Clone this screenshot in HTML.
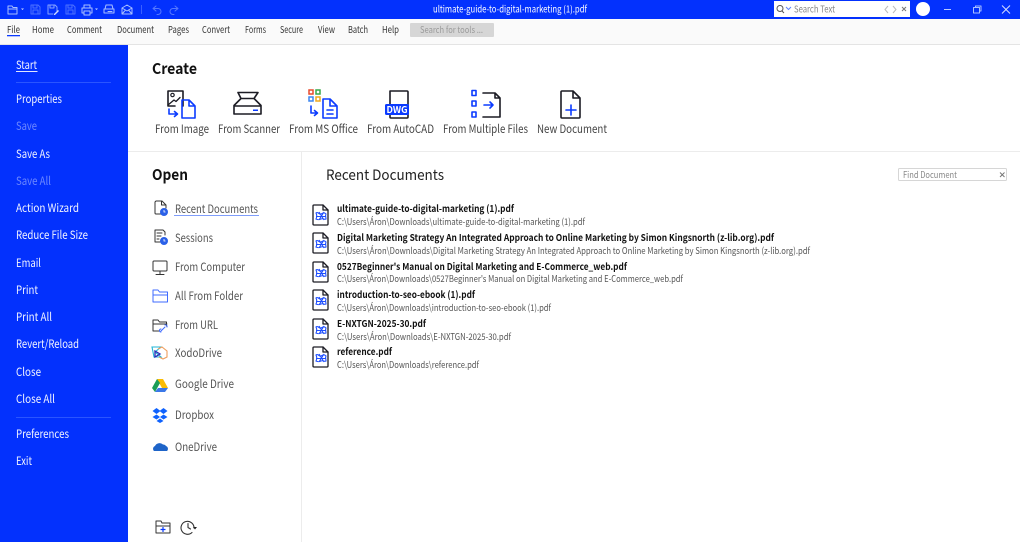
<!DOCTYPE html>
<html><head><meta charset="utf-8"><title>PDF</title>
<style>
html,body{margin:0;padding:0;background:#fff;width:1020px;height:542px;overflow:hidden}
svg{display:block}
text{font-family:"Noto Sans CJK JP","Liberation Sans",sans-serif}
.m{font-size:9.5px;fill:#333}
.s{font-size:11.5px;fill:#fff;fill-opacity:.95}
.d{fill-opacity:.42}
.c{font-size:11.5px;fill:#444}
.o{font-size:11.5px;fill:#555}
.b{font-size:9.5px;font-weight:bold;fill:#111}
.p{font-size:9px;fill:#555}
.k{fill:none;stroke:#1c1c24;stroke-width:1.6;stroke-linejoin:round;stroke-linecap:round}
.u{fill:none;stroke:#0b3bff;stroke-width:1.6;stroke-linejoin:round;stroke-linecap:round}
.t{fill:none;stroke:#a9c0ff;stroke-width:1;stroke-linejoin:round;stroke-linecap:round}
.g{fill:none;stroke:#333;stroke-width:1;stroke-linejoin:round;stroke-linecap:round}
.h{fill:none;stroke:#3f6bff;stroke-width:1;stroke-linejoin:round;stroke-linecap:round}
</style></head><body>
<svg width="1020" height="542" viewBox="0 0 1020 542" xmlns="http://www.w3.org/2000/svg">
<defs>
<g id="pdf"><path class="k" d="M1 1h9l5 5v14a1 1 0 0 1-1 1H1a1 1 0 0 1-1-1V2a1 1 0 0 1 1-1z" style="stroke-width:1.3"/><path class="k" d="M10 1v5h5" style="stroke-width:1.3"/><path d="M3 9c2-2 3 2 5 1s3-2 5 0c-1 2 0 3 0 5-2 1-3-1-5 0s-3 1-5 0c1-2 1-4 0-6zM3 12.500h10M6 8l5 8M11 8l-5 8" fill="none" stroke="#1f4fff" stroke-width="1.100"/></g>
</defs>
<rect width="1020" height="542" fill="#fff"/>
<rect width="1020" height="19" fill="#0331fd"/>
<rect y="19" width="1020" height="25" fill="#fafafa"/>
<rect y="44" width="1020" height="1" fill="#e4e4e4"/>
<rect y="45" width="128" height="497" fill="#0331fd"/>
<rect x="128" y="151" width="892" height="1" fill="#ececec"/>
<rect x="301" y="152" width="1" height="390" fill="#ececec"/>

<!-- title bar icons -->
<path class="t" d="M8 14V6h4l1 1.500h4V14zM8 9h9"/><path d="M21 8.500h3l-1.500 1.500z" fill="#cfdcff"/>
<path class="t" style="opacity:.45" d="M31 5h7l2 2v7h-9zM33 5v3h4V5M33 14v-4h5v4"/>
<path class="t" style="opacity:.8" d="M48 5h7l2 2v4M48 5v9h5M50 5v3h4V5"/><path d="M54 14l4-4 1 1-4 4h-1z" fill="#cfdcff"/>
<path class="t" style="opacity:.45" d="M66 5h7l2 2v7h-9zM68 5v3h4V5M68 14v-4h5v4"/>
<path class="t" d="M84 8V5h6v3M82 8h10v5h-2M84 13h-2V8M84 11h6v4h-6z"/><path d="M95 8.500h3l-1.500 1.500z" fill="#cfdcff"/>
<path class="t" d="M106 5h6l1 4h-8zM104 9h10v4h-10zM108 11.500h4"/>
<path class="t" d="M122 8l5-3 5 3v6h-10zM122 8l5 3 5-3M122 14l3.500-4M132 14l-3.500-4"/>
<rect x="141" y="5" width="1" height="9" fill="#3a60ff"/>
<path class="t" style="opacity:.5" d="M156 6l-3 2.500 3 2.500M153 8.500h5a3 3 0 0 1 0 6h-1"/>
<path class="t" style="opacity:.5" d="M175 6l3 2.500-3 2.500M178 8.500h-5a3 3 0 0 0 0 6h1"/>
<text x="433" y="12.500" font-size="9.500" fill="#fff" textLength="154" lengthAdjust="spacingAndGlyphs">ultimate-guide-to-digital-marketing (1).pdf</text>

<rect x="774" y="1" width="136" height="16" fill="#fff"/>
<circle cx="780" cy="8.500" r="3" fill="none" stroke="#555" stroke-width="1"/><path d="M782 11l2 2" stroke="#555" stroke-width="1"/>
<path d="M786 7l2.500 2.500L791 7" fill="none" stroke="#5f83ff" stroke-width="1"/>
<text x="794" y="12.500" font-size="9.500" fill="#888" textLength="41" lengthAdjust="spacingAndGlyphs">Search Text</text>
<path d="M888 6l-3 3.500 3 3.500M893 6l3 3.500-3 3.500" fill="none" stroke="#bbb" stroke-width="1"/>
<path d="M902 7l4 4M906 7l-4 4" stroke="#777" stroke-width="1"/>
<circle cx="923" cy="9" r="7" fill="#fff"/>
<rect x="944" y="9" width="7" height="1" fill="#bccbff"/>
<path class="t" d="M973.500 7.500h6v5.500h-6zM975.500 7.500V6h5.500v5h-1.500"/>
<path d="M1002 5.500l8 8M1010 5.500l-8 8" stroke="#d5deff" stroke-width="1"/>

<!-- menu -->
<text class="m" x="7" y="33" textLength="13" lengthAdjust="spacingAndGlyphs">File</text>
<rect x="7" y="35" width="13" height="1.300" fill="#0b3bff"/>
<text class="m" x="32" y="33" textLength="22" lengthAdjust="spacingAndGlyphs">Home</text>
<text class="m" x="67" y="33" textLength="35" lengthAdjust="spacingAndGlyphs">Comment</text>
<text class="m" x="117" y="33" textLength="37" lengthAdjust="spacingAndGlyphs">Document</text>
<text class="m" x="168" y="33" textLength="21" lengthAdjust="spacingAndGlyphs">Pages</text>
<text class="m" x="202" y="33" textLength="28" lengthAdjust="spacingAndGlyphs">Convert</text>
<text class="m" x="245" y="33" textLength="21" lengthAdjust="spacingAndGlyphs">Forms</text>
<text class="m" x="280" y="33" textLength="23" lengthAdjust="spacingAndGlyphs">Secure</text>
<text class="m" x="318" y="33" textLength="17" lengthAdjust="spacingAndGlyphs">View</text>
<text class="m" x="348" y="33" textLength="20" lengthAdjust="spacingAndGlyphs">Batch</text>
<text class="m" x="382" y="33" textLength="17" lengthAdjust="spacingAndGlyphs">Help</text>
<rect x="410" y="23" width="84" height="14" rx="1" fill="#d6d6d6"/>
<text x="420" y="33" font-size="9" fill="#9a9a9a" textLength="63" lengthAdjust="spacingAndGlyphs">Search for tools ...</text>

<!-- sidebar -->
<text class="s" x="16" y="69" textLength="21" lengthAdjust="spacingAndGlyphs">Start</text>
<rect x="16" y="71" width="21.500" height="1" fill="#dfe6ff"/>
<rect x="16" y="82" width="95" height="1" fill="#2a55ff"/>
<text class="s" x="16" y="103" textLength="46" lengthAdjust="spacingAndGlyphs">Properties</text>
<text class="s d" x="16" y="130" textLength="21" lengthAdjust="spacingAndGlyphs">Save</text>
<text class="s" x="16" y="158" textLength="34" lengthAdjust="spacingAndGlyphs">Save As</text>
<text class="s d" x="16" y="185" textLength="35" lengthAdjust="spacingAndGlyphs">Save All</text>
<text class="s" x="16" y="212" textLength="63" lengthAdjust="spacingAndGlyphs">Action Wizard</text>
<text class="s" x="16" y="239" textLength="72" lengthAdjust="spacingAndGlyphs">Reduce File Size</text>
<text class="s" x="16" y="267" textLength="25" lengthAdjust="spacingAndGlyphs">Email</text>
<text class="s" x="16" y="294" textLength="22" lengthAdjust="spacingAndGlyphs">Print</text>
<text class="s" x="16" y="321" textLength="36" lengthAdjust="spacingAndGlyphs">Print All</text>
<text class="s" x="16" y="348" textLength="63" lengthAdjust="spacingAndGlyphs">Revert/Reload</text>
<text class="s" x="16" y="376" textLength="25" lengthAdjust="spacingAndGlyphs">Close</text>
<text class="s" x="16" y="403" textLength="39" lengthAdjust="spacingAndGlyphs">Close All</text>
<rect x="16" y="417" width="95" height="1" fill="#2a55ff"/>
<text class="s" x="16" y="438" textLength="53" lengthAdjust="spacingAndGlyphs">Preferences</text>
<text class="s" x="16" y="465" textLength="16" lengthAdjust="spacingAndGlyphs">Exit</text>

<!-- create -->
<text x="152" y="74" font-size="15" font-weight="bold" fill="#111" textLength="45" lengthAdjust="spacingAndGlyphs">Create</text>
<path class="k" d="M183 106v-15h-15v15h7"/><circle cx="172.500" cy="95" r="1.700" class="k" style="stroke-width:1.200"/><path class="k" style="stroke-width:1.300" d="M168 105l6-5 2 1.500 4-4"/>
<path class="u" d="M182 100h7l6 6v12h-13zM189 100v6h6"/><path class="u" d="M169 109v5h8M174.500 111.500l3 2.500-3 2.500"/>
<path class="k" d="M238 92.500h20l-4 6 7 7v8.500h-27v-8.500l7-7zM234 106h27M242 98.500h11"/><rect x="253" y="109.500" width="5" height="1.500" fill="#0b3bff"/>
<rect x="309" y="90" width="4" height="4" fill="none" stroke="#e74b2e" stroke-width="1.500"/><rect x="316" y="90" width="4" height="4" fill="none" stroke="#37a84a" stroke-width="1.500"/><rect x="309" y="97" width="4" height="4" fill="none" stroke="#3d86f0" stroke-width="1.500"/><rect x="316" y="97" width="4" height="4" fill="none" stroke="#f0a91f" stroke-width="1.500"/>
<path class="u" d="M323 99h7l7 7v12h-14zM330 99v7h7M327 110h6M327 114h6"/><path class="u" d="M311 106v7h6M314.500 110.500l3 2.500-3 2.500"/>
<path class="k" d="M390 105V91h17a1 1 0 0 1 1 1v25a1 1 0 0 1-1 1h-16a1 1 0 0 1-1-1v-2"/>
<rect x="385" y="104" width="24" height="11" rx="1.500" fill="#0b3bff"/><text x="386.500" y="113" font-size="9" font-weight="bold" fill="#fff" textLength="21" lengthAdjust="spacingAndGlyphs">DWG</text>
<path class="u" d="M472 90.500h4v5h-4zM472 101h4v5h-4zM472 112h4v5h-4z"/>
<path class="k" d="M483 93h12l5 5v19h-17M495 93v5h5"/><path class="u" d="M484 105h9M490 102l3 3-3 3"/>
<path class="k" d="M562 91h11l7 7v19a1 1 0 0 1-1 1h-17a1 1 0 0 1-1-1V92a1 1 0 0 1 1-1zM573 91v7h7"/><path class="u" d="M566 110h10M571 105v10"/>
<text class="c" x="155" y="133" textLength="54" lengthAdjust="spacingAndGlyphs">From Image</text>
<text class="c" x="218" y="133" textLength="62" lengthAdjust="spacingAndGlyphs">From Scanner</text>
<text class="c" x="289" y="133" textLength="69" lengthAdjust="spacingAndGlyphs">From MS Office</text>
<text class="c" x="367" y="133" textLength="67" lengthAdjust="spacingAndGlyphs">From AutoCAD</text>
<text class="c" x="443" y="133" textLength="85" lengthAdjust="spacingAndGlyphs">From Multiple Files</text>
<text class="c" x="537" y="133" textLength="70" lengthAdjust="spacingAndGlyphs">New Document</text>

<!-- open -->
<text x="152" y="180" font-size="15" font-weight="bold" fill="#111" textLength="36" lengthAdjust="spacingAndGlyphs">Open</text>
<path class="g" d="M161 214h-5a1 1 0 0 1-1-1v-11l1-1h6l4 4v3M161.500 201v4h4.500"/><circle cx="164" cy="212" r="3.500" fill="#2a60e8" stroke="#2a60e8"/><path d="M164 210v2h1.500" stroke="#fff" fill="none" stroke-width=".8"/>
<text class="o" x="175" y="213" textLength="83" lengthAdjust="spacingAndGlyphs">Recent Documents</text>
<rect x="174" y="215" width="85" height="1" fill="#7f9dfa"/>
<path class="g" d="M155 230h8l2 2v3M155 230v12h5M157 233h5M157 236h4M157 239h2"/><circle cx="164" cy="241" r="3.500" fill="#2a60e8" stroke="#2a60e8"/><path d="M164 239v2h1.500" stroke="#fff" fill="none" stroke-width=".8"/>
<text class="o" x="175" y="242" textLength="38" lengthAdjust="spacingAndGlyphs">Sessions</text>
<rect x="153" y="261" width="14" height="10" rx="1" class="g"/><path class="g" d="M160 271v3M156 274.500h8"/>
<text class="o" x="175" y="271" textLength="70" lengthAdjust="spacingAndGlyphs">From Computer</text>
<path class="h" d="M153 290h5l1.500 2h8v10h-14.500zM153 295h14.500"/>
<text class="o" x="175" y="300" textLength="68" lengthAdjust="spacingAndGlyphs">All From Folder</text>
<path class="g" d="M153 331v-11h5l1.500 2h7v4M153 324h14M153 331h6"/><path class="h" d="M161 331l4-4M165 325a1.500 1.500 0 0 1 2 2M161 329a1.500 1.500 0 0 0 0 3"/>
<text class="o" x="175" y="329" textLength="43" lengthAdjust="spacingAndGlyphs">From URL</text>
<path d="M152 347h9l-6 5 6 5h-7z" fill="none" stroke="#23b6d6" stroke-width="1.100"/><path d="M158 349l4-2 5 4v6l-4 2-4-2" fill="none" stroke="#ee9d5d" stroke-width="1.100"/><path d="M155 351l5 3-5 3z" fill="none" stroke="#2b2bb8" stroke-width="1.300"/>
<text class="o" x="175" y="357" textLength="47" lengthAdjust="spacingAndGlyphs">XodoDrive</text>
<path d="M157 379h6l5 9h-6z" fill="#fbbc05"/><path d="M157 379l-5 9 3 4 5-9z" fill="#1a9d58"/><path d="M155 392h10l3-4h-10z" fill="#3a78e8"/>
<text class="o" x="175" y="388" textLength="59" lengthAdjust="spacingAndGlyphs">Google Drive</text>
<path d="M156.500 408l4 3-4 3-4-3zM163.500 408l4 3-4 3-4-3zM156.500 414.500l3.500 2.500-3.500 2.500-4-2.500zM163.500 414.500l4 2.500-4 2.500-3.500-2.500zM160 418.500l3.500 2.500-3.500 2-3.500-2z" fill="#0f62fe"/>
<text class="o" x="175" y="419" textLength="39" lengthAdjust="spacingAndGlyphs">Dropbox</text>
<path d="M154 451a3 3 0 0 1 1-5 5 5 0 0 1 8-1.500 3.500 3.500 0 0 1 3 1.500 3 3 0 0 1 1 5z" fill="#1e64c8"/>
<text class="o" x="175" y="451" textLength="42" lengthAdjust="spacingAndGlyphs">OneDrive</text>
<path class="g" d="M156 533v-12h5l1 2h8v10zM156 526h14"/><path d="M163 527v5M160.500 529.500h5" stroke="#0b3bff" stroke-width="1.200"/>
<path class="g" d="M194 528a6.500 6.500 0 1 0-2 4.500M188 523.500v4l2.500 1.500" style="stroke-width:1.100"/><path d="M193 527h4l-2 2.500z" fill="#222"/>

<!-- recent -->
<text x="326" y="180" font-size="14.500" fill="#222" textLength="118" lengthAdjust="spacingAndGlyphs">Recent Documents</text>
<rect x="898.500" y="168.500" width="108" height="12" rx="1" fill="#fff" stroke="#d6d6d6"/>
<text x="903" y="178" font-size="9" fill="#888" textLength="54" lengthAdjust="spacingAndGlyphs">Find Document</text>
<path d="M1000 172.500l4.500 4.500M1004.500 172.500l-4.500 4.500" stroke="#777" stroke-width="1"/>

<use href="#pdf" x="313" y="204"/>
<text class="b" x="337" y="212" textLength="177" lengthAdjust="spacingAndGlyphs">ultimate-guide-to-digital-marketing (1).pdf</text>
<text class="p" x="337" y="225" textLength="248" lengthAdjust="spacingAndGlyphs">C:\Users\Áron\Downloads\ultimate-guide-to-digital-marketing (1).pdf</text>
<use href="#pdf" x="313" y="232"/>
<text class="b" x="337" y="241" textLength="437" lengthAdjust="spacingAndGlyphs">Digital Marketing Strategy An Integrated Approach to Online Marketing by Simon Kingsnorth (z-lib.org).pdf</text>
<text class="p" x="337" y="254" textLength="473" lengthAdjust="spacingAndGlyphs">C:\Users\Áron\Downloads\Digital Marketing Strategy An Integrated Approach to Online Marketing by Simon Kingsnorth (z-lib.org).pdf</text>
<use href="#pdf" x="313" y="261"/>
<text class="b" x="337" y="270" textLength="290" lengthAdjust="spacingAndGlyphs">0527Beginner's Manual on Digital Marketing and E-Commerce_web.pdf</text>
<text class="p" x="337" y="282" textLength="346" lengthAdjust="spacingAndGlyphs">C:\Users\Áron\Downloads\0527Beginner's Manual on Digital Marketing and E-Commerce_web.pdf</text>
<use href="#pdf" x="313" y="289"/>
<text class="b" x="337" y="298" textLength="138" lengthAdjust="spacingAndGlyphs">introduction-to-seo-ebook (1).pdf</text>
<text class="p" x="337" y="311" textLength="214" lengthAdjust="spacingAndGlyphs">C:\Users\Áron\Downloads\introduction-to-seo-ebook (1).pdf</text>
<use href="#pdf" x="313" y="318"/>
<text class="b" x="337" y="327" textLength="89" lengthAdjust="spacingAndGlyphs">E-NXTGN-2025-30.pdf</text>
<text class="p" x="337" y="340" textLength="174" lengthAdjust="spacingAndGlyphs">C:\Users\Áron\Downloads\E-NXTGN-2025-30.pdf</text>
<use href="#pdf" x="313" y="346"/>
<text class="b" x="337" y="355" textLength="55" lengthAdjust="spacingAndGlyphs">reference.pdf</text>
<text class="p" x="337" y="368" textLength="142" lengthAdjust="spacingAndGlyphs">C:\Users\Áron\Downloads\reference.pdf</text>
</svg>
</body></html>
